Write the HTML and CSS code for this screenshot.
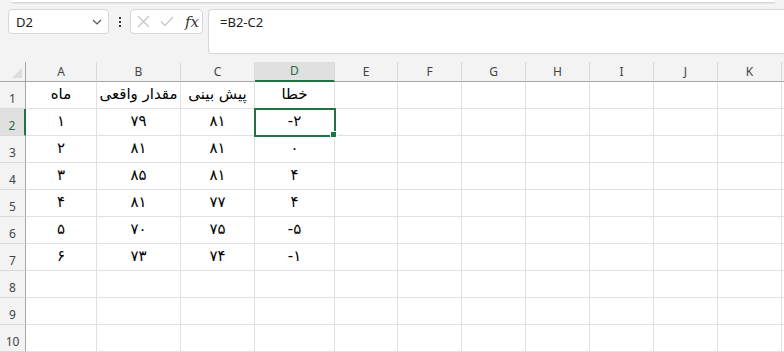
FILE: index.html
```html
<!DOCTYPE html>
<html lang="fa">
<head>
  <meta charset="UTF-8" />
  <meta name="viewport" content="width=device-width, initial-scale=1.0"/>
  <title>Sheet1</title>
  <link rel="stylesheet" href="styles.css">
</head>
<body>
  <div class="ribbon-edge"></div>

  <div class="formula-row">
    <div class="name-box">
      <span>D2</span>
      <svg class="chevron" width="10" height="6" viewBox="0 0 10 6">
        <path d="M1 1 L5 5 L9 1" fill="none" stroke="#555" stroke-width="1.2"/>
      </svg>
    </div>
    <div class="dots"><i></i><i></i><i></i></div>
    <div class="fx-box">
      <svg width="13" height="13" viewBox="0 0 13 13">
        <path d="M1 1 L12 12 M12 1 L1 12" stroke="#c4c4c4" stroke-width="1.2"/>
      </svg>
      <svg width="14" height="11" viewBox="0 0 14 11">
        <path d="M1 5.5 L5 9.5 L13 1" fill="none" stroke="#c4c4c4" stroke-width="1.2"/>
      </svg>
      <span class="fx">fx</span>
    </div>
    <div class="formula-bar">=B2-C2</div>
  </div>

  <div class="sheet">
    <div class="corner"><span class="tri"></span></div>
    <div class="col-h">A</div>
    <div class="col-h">B</div>
    <div class="col-h">C</div>
    <div class="col-h sel">D</div>
    <div class="col-h">E</div>
    <div class="col-h">F</div>
    <div class="col-h">G</div>
    <div class="col-h">H</div>
    <div class="col-h">I</div>
    <div class="col-h">J</div>
    <div class="col-h">K</div>
    <div class="col-h"></div>
  </div>

  <script>
    const data = [
      ["ماه", "مقدار واقعی", "پیش بینی", "خطا"],
      ["۱", "۷۹", "۸۱", "-۲"],
      ["۲", "۸۱", "۸۱", "۰"],
      ["۳", "۸۵", "۸۱", "۴"],
      ["۴", "۸۱", "۷۷", "۴"],
      ["۵", "۷۰", "۷۵", "-۵"],
      ["۶", "۷۳", "۷۴", "-۱"]
    ];
    const sheet = document.querySelector(".sheet");
    for (let r = 1; r <= 10; r++) {
      let html = `<div class="row-h${r === 2 ? " sel" : ""}">${r}</div>`;
      for (let c = 0; c < 11; c++) {
        const v = (data[r - 1] && data[r - 1][c]) || "";
        const active = (r === 2 && c === 3) ? " active" : "";
        html += `<div class="cell${active}">${v}</div>`;
      }
      html += `<div class="cell"></div>`;
      sheet.insertAdjacentHTML("beforeend", html);
    }
  </script>
</body>
</html>
```

FILE: styles.css
```css
body {
  margin: 0;
  background: #f3f3f3;
  font-family: "Noto Sans", sans-serif;
  overflow: hidden;
  height: 352px;
}

.ribbon-edge {
  height: 2px;
  margin: 0 9px 0 12px;
  background: #fff;
  box-shadow: 0 1px 2px rgba(0,0,0,0.18);
}

.formula-row {
  display: flex;
  align-items: flex-start;
  padding: 7px 0 8px 8px;
  height: 45px;
}

.name-box {
  box-sizing: border-box;
  width: 101px;
  height: 25px;
  background: #fff;
  border: 1px solid #d6d6d6;
  border-radius: 4px;
  display: flex;
  align-items: center;
  justify-content: space-between;
  padding: 0 6px 0 7px;
  font-size: 13px;
  color: #222;
}

.dots {
  width: 21px;
  height: 25px;
  display: flex;
  flex-direction: column;
  align-items: center;
  justify-content: center;
  gap: 2px;
}

.dots i {
  width: 2px;
  height: 2px;
  background: #333;
}

.fx-box {
  box-sizing: border-box;
  width: 73px;
  height: 25px;
  background: #fff;
  border: 1px solid #d6d6d6;
  border-radius: 4px;
  display: flex;
  align-items: center;
  gap: 10px;
  padding-left: 6px;
}

.fx {
  font-family: "DejaVu Serif", serif;
  font-style: italic;
  font-size: 15px;
  color: #333;
  margin-left: 1px;
}

.formula-bar {
  box-sizing: border-box;
  flex: 1;
  margin-left: 5px;
  height: 45px;
  background: #fff;
  border: 1px solid #d6d6d6;
  border-right: none;
  border-radius: 4px 0 0 4px;
  padding: 3px 0 0 11px;
  font-size: 13px;
  color: #222;
}

.sheet {
  display: grid;
  grid-template-columns: 26px 71px 84px 74px 80px 63px 64px 64px 64px 64px 64px 64px 10px;
  grid-auto-rows: 27px;
  grid-template-rows: 20px;
  background: #fff;
}

.corner, .col-h {
  background: #f3f3f3;
  border-bottom: 1px solid #a6a6a6;
  border-right: 1px solid #dadada;
  box-sizing: border-box;
}

.corner {
  position: relative;
  border-right-color: #a6a6a6;
}

.tri {
  position: absolute;
  left: 12px;
  bottom: 3px;
  width: 0;
  height: 0;
  border-left: 10px solid transparent;
  border-bottom: 10px solid #dcdcdc;
}

.col-h {
  font-size: 12px;
  color: #444;
  text-align: center;
  line-height: 19px;
}

.col-h.sel {
  background: #e0e0e0;
  color: #1e6b41;
  border-bottom: 2px solid #217346;
  line-height: 18px;
}

.row-h {
  box-sizing: border-box;
  background: #f3f3f3;
  border-right: 1px solid #a6a6a6;
  border-bottom: 1px solid #dadada;
  font-size: 12px;
  color: #444;
  text-align: center;
  padding-top: 8px;
}

.row-h.sel {
  background: #e0e0e0;
  color: #1e6b41;
  border-right: 2px solid #217346;
}

.cell {
  box-sizing: border-box;
  border-right: 1px solid #e1e1e1;
  border-bottom: 1px solid #e1e1e1;
  font-family: "DejaVu Sans", sans-serif;
  font-size: 15px;
  color: #000;
  text-align: center;
  padding-top: 3px;
}

.cell.active {
  position: relative;
  outline: 2px solid #217346;
  outline-offset: -1px;
}

.cell.active::after {
  content: "";
  position: absolute;
  right: -3px;
  bottom: -3px;
  width: 5px;
  height: 5px;
  background: #217346;
  border: 1px solid #fff;
}
```
